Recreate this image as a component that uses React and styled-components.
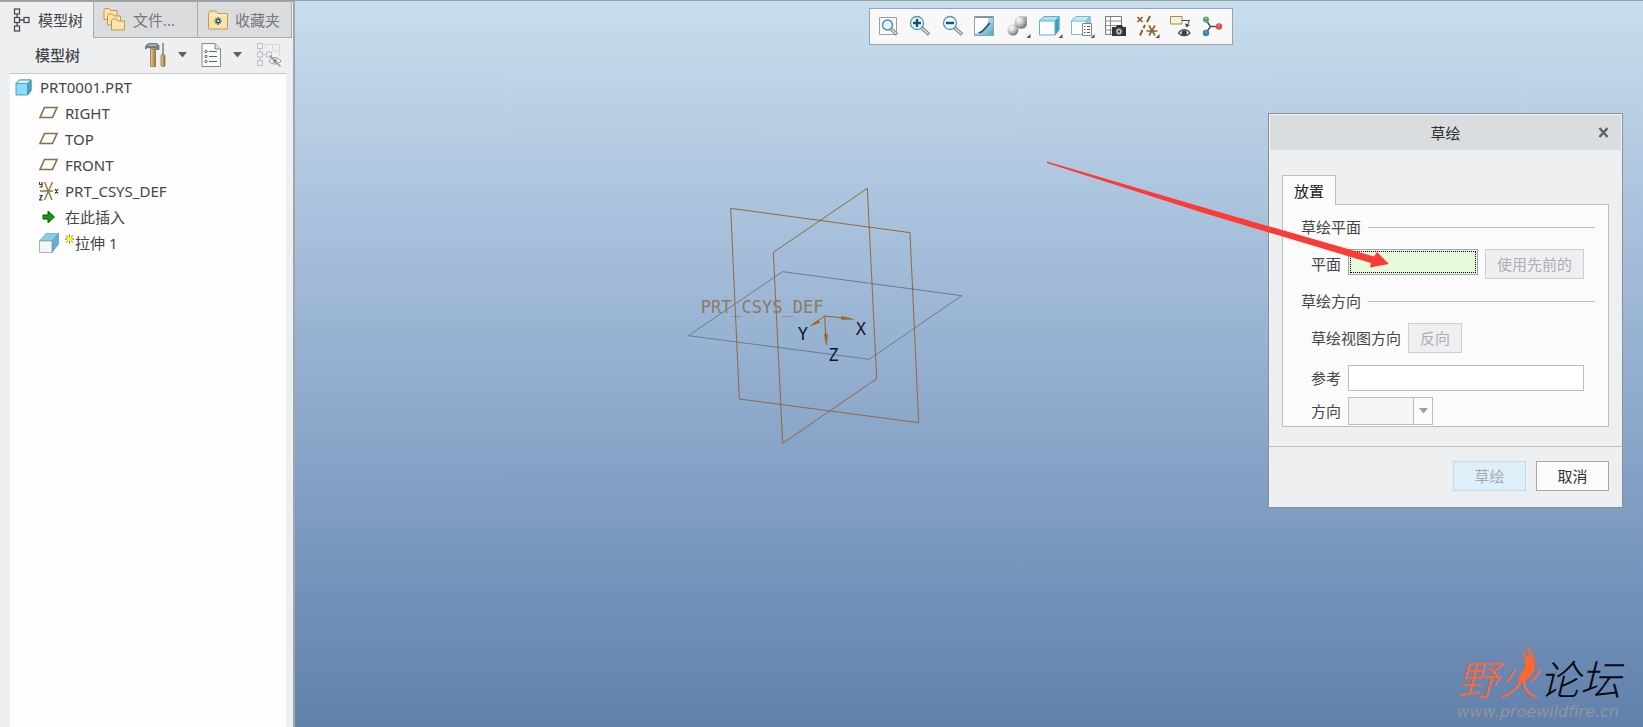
import React, { useState } from "react";
import styled, { createGlobalStyle, css } from "styled-components";

const GlobalStyle = createGlobalStyle`
  *, *::before, *::after {
    box-sizing: border-box;
  }

  body {
    margin: 0;
    overflow: hidden;
    font-family: "Noto Sans", "Noto Sans CJK SC", sans-serif;
    font-size: 15px;
    line-height: 20px;
    color: #444648;
  }

  button, input, select {
    font: inherit;
    color: inherit;
  }
`;

const Page = styled.div`
  display: flex;
  height: 100vh;
  border-top: 1px solid #9a9ea1;
  background: #eeeff1;
`;

/* ---------- side panel ---------- */

const SidePanel = styled.aside`
  display: flex;
  flex-direction: column;
  flex: 0 0 295px;
  border-top: 1px solid #a4a8aa;
  border-right: 2px solid #9fa5aa;
`;

const TabBar = styled.div`
  display: grid;
  grid-template-columns: 93px 104px 1fr;
  height: 36px;
  padding-right: 1px;
`;

const SideTab = styled.button`
  display: flex;
  align-items: center;
  gap: ${(props) => (props.$active ? 8 : 6)}px;
  padding: 0 0 0 9px;
  border: 0;
  background: #eeeff1;
  white-space: nowrap;
  cursor: pointer;
  ${(props) =>
    !props.$active &&
    css`
      border: solid #a8acae;
      border-width: 0 0 1px 1px;
      background: #dadcdd;
      color: #77797b;
    `}
  &:last-child {
    border-right: 1px solid #a8acae;
  }
`;

const TreeHeader = styled.div`
  display: flex;
  align-items: center;
  height: 36px;
  margin: 0 7px 0 10px;
  padding: 0 4px 1px 25px;
  border-bottom: 1px solid #c6c8ca;
`;

const TreeTitle = styled.h2`
  flex: 1;
  margin: 0;
  font-size: 15px;
  font-weight: 500;
`;

const HeaderTools = styled.div`
  display: flex;
  align-items: center;
  gap: 14px;
`;

const ToolGroup = styled.div`
  display: flex;
  align-items: center;
  gap: 11px;
`;

const IconButton = styled.button`
  display: flex;
  align-items: center;
  justify-content: center;
  padding: 0;
  border: 0;
  background: none;
  cursor: pointer;
  &:disabled {
    cursor: default;
  }
`;

const Tree = styled.ul`
  flex: 1;
  margin: 0 7px 0 10px;
  padding: 0 0 0 5px;
  background: #fdfdfd;
  list-style: none;
`;

const TreeItem = styled.li`
  display: flex;
  align-items: center;
  gap: ${(props) => (props.$level ? 6 : 8)}px;
  height: 26px;
  padding-left: ${(props) => (props.$level ? 24 : 0)}px;
`;

const TreeLabel = styled.span`
  display: flex;
  align-items: center;
`;

/* ---------- graphics area ---------- */

const Viewport = styled.main`
  position: relative;
  flex: 1;
  min-width: 0;
  overflow: hidden;
  background: linear-gradient(#c8ddee, #94afd0 50%, #6180ab);
`;

const GraphicsToolbar = styled.div`
  position: absolute;
  top: 7px;
  right: 410px;
  display: flex;
  justify-content: space-between;
  width: 364px;
  height: 37px;
  padding: 0 3px 2px;
  border: 1px solid #9ba3aa;
  background: #f8f8f8;
`;

const ToolButton = styled(IconButton)`
  width: 32px;
  &:hover {
    background: #e0eff8;
  }
`;

const ModelView = styled.svg`
  position: absolute;
  top: 169px;
  left: 375px;
  width: 310px;
  height: 290px;
  font-family: "DejaVu Sans Mono", monospace;
`;

const Pointer = styled.svg`
  position: absolute;
  top: 159px;
  right: 250px;
  width: 350px;
  height: 110px;
  pointer-events: none;
`;

const Watermark = styled.div`
  position: absolute;
  right: 22px;
  bottom: 7px;
  font-family: "Liberation Sans", "Noto Sans CJK SC", sans-serif;
  text-align: right;
`;

const WatermarkName = styled.div`
  position: relative;
  color: #06080c;
  font-size: 41px;
  font-style: italic;
  font-weight: 300;
  line-height: 46px;
`;

const WatermarkAccent = styled.span`
  color: #ff6633;
`;

const Flame = styled.svg`
  position: absolute;
  top: -17px;
  left: 60px;
  width: 20px;
  height: 44px;
`;

const WatermarkUrl = styled.div`
  padding-right: 2px;
  color: #8f959c;
  font-family: "DejaVu Sans", sans-serif;
  font-size: 16px;
  font-style: italic;
  line-height: 16px;
`;

/* ---------- sketch dialog ---------- */

const Dialog = styled.form`
  position: absolute;
  top: 112px;
  right: 20px;
  width: 355px;
  border: 1px solid #888f96;
  background: #eeeff1;
`;

const DialogHeader = styled.header`
  display: grid;
  grid-template-columns: 36px 1fr 36px;
  align-items: center;
  height: 36px;
  border: 1px solid #f2f3f4;
  border-bottom: 0;
  background: #dadddf;
  color: #2c2e30;
`;

const DialogTitle = styled.h1`
  grid-column: 2;
  margin: 0;
  font-size: 15px;
  font-weight: 400;
  text-align: center;
`;

const DialogBody = styled.div`
  padding: 25px 13px 19px;
`;

const DialogTab = styled.button`
  position: relative;
  z-index: 1;
  display: block;
  width: 54px;
  height: 30px;
  margin-bottom: -1px;
  padding: 0;
  border: 1px solid #bcbfc2;
  border-bottom: 0;
  background: #fbfbfb;
  color: #1f2123;
`;

const TabPanel = styled.div`
  border: 1px solid #bcbfc2;
  background: #fbfbfb;
`;

const GroupTitle = styled.h3`
  display: flex;
  align-items: center;
  gap: 7px;
  margin: 0;
  padding: 12px 13px 0 18px;
  font-size: 15px;
  font-weight: 400;
  &::after {
    content: "";
    flex: 1;
    height: 1px;
    background: #bcbfc2;
  }
`;

const FieldRow = styled.div`
  display: flex;
  align-items: ${(props) => (props.$top ? "flex-start" : "center")};
  gap: 7px;
  margin-top: ${(props) => props.$space}px;
  padding: 0 24px 0 28px;
`;

const FieldLabel = styled.label`
  flex: none;
  line-height: 30px;
`;

const TextField = styled.input`
  flex: 1;
  min-width: 0;
  height: 26px;
  padding: 0 6px;
  border: 1px solid #bcbfc2;
  border-radius: 0;
  background: #fff;
  outline: 0;
  ${(props) =>
    props.$collecting &&
    css`
      border-color: #a0a4a6;
      background: #e6fadb;
      outline: 1px dotted #000;
      outline-offset: -3px;
    `}
`;

const SelectBox = styled.div`
  position: relative;
  width: 85px;
  height: 28px;
`;

const Select = styled.select`
  width: 100%;
  height: 100%;
  border: 1px solid #bcbfc2;
  border-radius: 0;
  background: #f4f5f6;
  appearance: none;
  opacity: 1;
`;

const SelectArrow = styled.span`
  position: absolute;
  inset: 1px 1px 1px auto;
  display: flex;
  align-items: center;
  justify-content: center;
  width: 19px;
  border-left: 1px solid #bcbfc2;
  background: #fbfbfb;
  pointer-events: none;
`;

const Button = styled.button`
  flex: none;
  width: ${(props) => props.$width}px;
  height: 30px;
  padding: 0;
  border: 1px solid #a4a7aa;
  background: #fbfbfb;
  color: #333537;
  cursor: pointer;
  &:disabled {
    border-color: #cdcfd1;
    background: #eeeff1;
    color: #adafb1;
    cursor: default;
  }
`;

const PrimaryButton = styled(Button)`
  &:disabled {
    border-color: #b9def2;
    background: #dfeff9;
    color: #a3abb0;
  }
`;

const DialogFooter = styled.footer`
  display: flex;
  justify-content: flex-end;
  gap: 10px;
  padding: 14px 13px 16px;
  border-top: 1px solid #bcbfc2;
`;

/* ---------- icons ---------- */

const Caret = ({ color = "#5c6064" }) => (
  <svg width="9" height="6" viewBox="0 0 9 6">
    <path d="M0 0h9L4.500 5.500z" fill={color} />
  </svg>
);

const ModelTreeIcon = () => (
  <svg width="21" height="26" viewBox="-1 0 21 26" fill="none" stroke="#4a4d50" strokeWidth="1.300">
    <rect x="4.500" y="2" width="5" height="5" />
    <rect x="4.500" y="10.500" width="5" height="5" />
    <rect x="4.500" y="19" width="5" height="5" />
    <rect x="14" y="10.500" width="5" height="5" />
    <path d="M7 7v3.500M7 15.500V19M9.500 13H14" />
  </svg>
);

const folder = "M0.500 2.500l1-1.500h4l1.500 2h6.500v9H0.500z";

const FoldersIcon = () => (
  <svg width="24" height="26" viewBox="0 0 24 26" fill="#fbe2a6" stroke="#b98f4c" strokeWidth="0.900">
    <path d={folder} transform="translate(.500 .500)" />
    <path d={folder} transform="translate(4 6)" />
    <path d={folder} transform="translate(8 11)" />
    <path d="M10 17h11" stroke="#fff6dc" />
  </svg>
);

const FavoritesIcon = () => (
  <svg width="22" height="20" viewBox="0 0 22 20">
    <path d="M1.500 3.500L3 1h6l2 2.500h9.500V19h-19z" fill="#fbe2a6" stroke="#c39a58" />
    <path d="M2.500 5h17" stroke="#fff5d8" />
    <path d="M11 7v8M7 11h8M8.500 8.500l5 5M13.500 8.500l-5 5" stroke="#16556b" strokeWidth="1.200" />
    <circle cx="11" cy="11" r="1" fill="#d9f3fa" />
  </svg>
);

const HammerIcon = () => (
  <svg width="22" height="26" viewBox="0 0 22 26">
    <defs>
      <linearGradient id="wood">
        <stop offset="0" stopColor="#f0cf92" />
        <stop offset="1" stopColor="#9b6f33" />
      </linearGradient>
    </defs>
    <path d="M5.500 7h5v17.500h-5z" fill="url(#wood)" stroke="#8a6531" strokeWidth=".700" />
    <path d="M0.500 4l3-2.500H12l2 2v4h-2.500L11 6H4.500L3 5.500.500 7z" fill="#7b8286" stroke="#4c5154" strokeWidth=".600" />
    <path d="M3.500 3h8" stroke="#d5dadd" />
    <path d="M18 1v12" stroke="#7c8285" strokeWidth="1.500" />
    <rect x="16" y="12.500" width="4" height="12" rx="1.500" fill="url(#wood)" stroke="#8a6531" strokeWidth=".700" />
  </svg>
);

const SettingsListIcon = () => (
  <svg width="21" height="26" viewBox="0 0 21 26" fill="none" stroke="#84898d">
    <path d="M1 1.500h13l5.500 5.500v17.500H1z" fill="#fafbfb" />
    <path d="M14 1.500V7h5.500" fill="#dfe2e4" />
    <path d="M8 9.500h8M8 14.500h8M8 19.500h8" stroke="#5f6569" />
    <circle cx="5" cy="9.500" r="1.200" stroke="#5f6569" />
    <circle cx="5" cy="14.500" r="1.200" stroke="#5f6569" />
    <circle cx="5" cy="19.500" r="1.200" stroke="#5f6569" />
  </svg>
);

const HideTreeIcon = () => (
  <svg width="26" height="26" viewBox="0 0 26 26" fill="none" stroke="#bfc2c5">
    <rect x="1.500" y="1.500" width="5" height="5" />
    <rect x="1.500" y="10" width="5" height="5" />
    <rect x="1.500" y="18.500" width="5" height="5" />
    <rect x="10.500" y="10" width="5" height="5" />
    <path d="M4 6.500V10M4 15v3.500M6.500 12.500h4" />
    <path d="M9 2.500h14.500V14M16.500 2.500V9M9 2.500V7M17 9h6" stroke="#d6d8da" />
    <path d="M13 19c3-4.500 9-4.500 12 0-3 4-9 4-12 0z" stroke="#94999d" />
    <circle cx="19" cy="19" r="2" fill="#94999d" stroke="none" />
    <path d="M13.500 13.500l11 11" stroke="#8c9195" strokeWidth="1.300" />
  </svg>
);

const PartIcon = () => (
  <svg width="17" height="17" viewBox="0 0 17 17" stroke="#3b8fb0" strokeWidth=".800">
    <path d="M1 4.500L4.500 1H16v10.500L12.500 16H1z" fill="#8bdcf5" />
    <path d="M12.500 4.500L16 1v10.500L12.500 16z" fill="#3fa5cb" />
    <path d="M1 4.500L4.500 1H16l-3.500 3.500z" fill="#d3f4fd" />
  </svg>
);

const DatumPlaneIcon = () => (
  <svg width="20" height="14" viewBox="0 0 20 14">
    <path d="M5.500 1.500H18l-4.500 10H1z" fill="#fffdf7" stroke="#85704e" strokeWidth="1.600" />
  </svg>
);

const CsysIcon = () => (
  <svg width="20" height="20" viewBox="0 0 20 20" fill="none">
    <path d="M1 10h13M5.500 1l7.500 18M13.500 1L5.500 19" stroke="#927447" strokeWidth="1.400" />
    <path d="M.500 1v2.500h2.500V1M3 3.500V6H.500M.500 14.500H3L.500 19H3.500M16 8l3 4.500M19 8l-3 4.500" stroke="#33363d" strokeWidth="1.200" />
  </svg>
);

const InsertIcon = () => (
  <svg width="20" height="16" viewBox="0 0 20 16">
    <path d="M4 6h5V2l6.500 6L9 14v-4H4z" fill="#15990f" stroke="#0b5708" />
  </svg>
);

const ExtrudeIcon = () => (
  <svg width="20" height="20" viewBox="0 0 20 20" strokeWidth=".700">
    <path d="M.500 8L7 .500h12.500L13 8z" fill="#8ccbe5" stroke="#6ba0b8" />
    <path d="M13 8l6.500-7.500V11L13 19.500z" fill="#67aed0" stroke="#5b93ac" />
    <path d="M.500 8H13v11.500H.500z" fill="#f3f5f6" stroke="#8c9295" />
  </svg>
);

const NewMark = () => (
  <svg width="10" height="20" viewBox="0 0 10 20">
    <path d="M4.500 1.500v9M0 6h9M1 2.500l7 7M8 2.500l-7 7" stroke="#6c6f1c" />
    <circle cx="4.500" cy="6" r="2.600" fill="#fbf904" />
  </svg>
);

const CloseIcon = () => (
  <svg width="11" height="11" viewBox="0 0 11 11">
    <path d="M1.500 1l8 9M9.500 1l-8 9" stroke="#5e6265" strokeWidth="2.400" />
  </svg>
);

const ToolIcon = ({ children, menu }) => (
  <svg width="24" height="24" viewBox="0 0 24 24" fill="none">
    {children}
    {menu && <path d="M23.500 20v4h-4z" fill="#4f5356" />}
  </svg>
);

const Handle = () => (
  <>
    <path d="M12.500 13.500l7.500 7" stroke="#777d81" strokeWidth="3.400" />
    <path d="M13 14l6.500 6" stroke="#dfe3e5" strokeWidth="1.600" />
  </>
);

const Magnifier = () => (
  <>
    <Handle />
    <circle cx="8" cy="9" r="6.500" fill="#eaf8fd" stroke="#5a97ad" strokeWidth="1.300" />
  </>
);

const tools = [
  {
    name: "Refit",
    icon: (
      <>
        <path d="M2.500 3.500h17v17h-17z" fill="#fafafa" stroke="#9ca1a4" />
        <Handle />
        <circle cx="10.500" cy="11" r="5" fill="#e3f5fc" stroke="#4f8da5" strokeWidth="1.400" />
      </>
    ),
  },
  {
    name: "Zoom in",
    icon: (
      <>
        <Magnifier />
        <path d="M4 9h8M8 5v8" stroke="#0d5877" strokeWidth="2.400" />
      </>
    ),
  },
  {
    name: "Zoom out",
    icon: (
      <>
        <Magnifier />
        <path d="M4 9h8" stroke="#0d5877" strokeWidth="2.400" />
      </>
    ),
  },
  {
    name: "Repaint",
    icon: (
      <>
        <defs>
          <linearGradient id="repaint" x1="0" y1="0" x2="1" y2="1">
            <stop offset=".35" stopColor="#c4e6f2" />
            <stop offset="1" stopColor="#4fa3c1" />
          </linearGradient>
        </defs>
        <path d="M.500 3h19v18.500H.500z" fill="url(#repaint)" stroke="#86a5b1" />
        <path d="M1 4h13c0 8-4 14-13 15z" fill="#fff" />
        <path d="M.500 3h19" stroke="#6f8790" strokeWidth="1.500" />
        <path d="M16 9l-8 8.500-3 1.500" stroke="#155a70" strokeWidth="1.800" />
      </>
    ),
  },
  {
    name: "Display quality",
    menu: true,
    icon: (
      <>
        <defs>
          <radialGradient id="ball" cx=".35" cy=".3" r=".75">
            <stop offset="0" stopColor="#fff" />
            <stop offset=".5" stopColor="#c4c6c8" />
            <stop offset="1" stopColor="#6c6f71" />
          </radialGradient>
        </defs>
        <path d="M12 2.500h8v8c0 4-6 6-9 3z" fill="#a3a6a8" />
        <circle cx="13.500" cy="8.500" r="6" fill="url(#ball)" />
        <circle cx="6" cy="16" r="5.500" fill="url(#ball)" />
      </>
    ),
  },
  {
    name: "Display style",
    menu: true,
    icon: (
      <g stroke="#62afca">
        <path d="M.500 7L5 2.500h15V16l-4 5H.500z" fill="#fff" />
        <path d="M16 7l4-4.500V16l-4 5z" fill="#3f9fc0" />
        <path d="M.500 7L5 2.500h15L16 7z" fill="#a9e0f2" />
      </g>
    ),
  },
  {
    name: "Saved orientations",
    menu: true,
    icon: (
      <>
        <g stroke="#78bcd3">
          <path d="M.500 7L5 2.500h14V16l-4 4.500H.500z" fill="#fff" />
          <path d="M15 7l4-4.500V16l-4 4.500z" fill="#8ccde2" />
          <path d="M.500 7L5 2.500h14L15 7z" fill="#c3eaf6" />
        </g>
        <path d="M11.500 9.500h9v12h-9z" fill="#fafafa" stroke="#84898c" />
        <path d="M13 12.500h1.500M16 12.500h3M13 15.500h1.500M16 15.500h3M13 18.500h1.500M16 18.500h3" stroke="#5d6164" />
      </>
    ),
  },
  {
    name: "View manager",
    icon: (
      <>
        <path d="M1.500 2.500h16v18h-16z" fill="#fdfdfd" stroke="#777b7e" />
        <path d="M1.500 7h16M1.500 11.500h16M1.500 16h16M6.500 2.500v18" stroke="#888c8f" />
        <path d="M8 13h4l1-2h5l1 2h3v9H8z" fill="#33373b" />
        <circle cx="15" cy="17.500" r="3" fill="#d6dadd" stroke="#6a7074" />
        <circle cx="15" cy="17.500" r="1.200" fill="#33373b" />
      </>
    ),
  },
  {
    name: "Datum display",
    menu: true,
    icon: (
      <g stroke="#85652a">
        <path d="M1.500 3l5 5M6.500 3l-5 5" strokeWidth="1.700" />
        <path d="M14 2l-3 6M9 11l-1.500 3M6.500 16l-2.500 5.500" strokeWidth="2" />
        <path d="M10.500 17h11M13 11.500l6 10M19 11.500l-6 10" strokeWidth="1.600" />
      </g>
    ),
  },
  {
    name: "Annotation display",
    icon: (
      <>
        <path d="M1.500 2.500h11.500v7.500H1.500z" fill="#fcf2d1" stroke="#9a8866" />
        <path d="M13 6.500h7.500L18 12" stroke="#44484b" />
        <path d="M16 9.500l1.500 4 3.500-2.500z" fill="#44484b" />
        <path d="M9.500 19c3-4.500 8.500-4.500 11.500 0-3 3.500-8.500 3.500-11.500 0z" fill="#f4f5f5" stroke="#494d50" strokeWidth="1.300" />
        <circle cx="15.200" cy="18.800" r="2.600" fill="#3a3e41" />
      </>
    ),
  },
  {
    name: "Spin center",
    icon: (
      <>
        <path d="M5 6l4.500 6.500L5 19M9.500 12.500H18" stroke="#4c5558" strokeWidth="1.500" />
        <circle cx="5" cy="5.500" r="3" fill="#4fae5c" />
        <circle cx="18" cy="12.500" r="3.200" fill="#d9564c" />
        <circle cx="5" cy="19" r="3.200" fill="#3d84ab" />
        <path d="M4 4.500h1.500M17 11.500h1.500M4 18h1.500" stroke="#fff" opacity=".6" />
      </>
    ),
  },
];

const treeNodes = [
  { label: "PRT0001.PRT", icon: <PartIcon />, level: 0 },
  { label: "RIGHT", icon: <DatumPlaneIcon />, level: 1 },
  { label: "TOP", icon: <DatumPlaneIcon />, level: 1 },
  { label: "FRONT", icon: <DatumPlaneIcon />, level: 1 },
  { label: "PRT_CSYS_DEF", icon: <CsysIcon />, level: 1 },
  { label: "在此插入", icon: <InsertIcon />, level: 1 },
  { label: "拉伸 1", icon: <ExtrudeIcon />, level: 1, isNew: true },
];

const sideTabs = [
  { label: "模型树", icon: <ModelTreeIcon /> },
  { label: "文件...", icon: <FoldersIcon /> },
  { label: "收藏夹", icon: <FavoritesIcon /> },
];

const DatumModel = () => (
  <ModelView viewBox="0 0 930 870" fill="none">
    <g strokeWidth="3">
      <path d="M338 305L875 377 598 568 55 497z" stroke="#6b7b93" />
      <path d="M182 115L720 188 746 758 208 687z" stroke="#91693f" />
      <path d="M592 55L620 626 338 820 310 247z" stroke="#91693f" />
    </g>
    <g stroke="#91622c" strokeWidth="3" fill="#a9681c">
      <path d="M464 438L540 446M464 438l-40 28M464 438l4 80" />
      <path d="M514 439l38 9-38 1zM420 468l24-18 6 8zM462 492h11l-3 35z" strokeWidth="1" />
    </g>
    <text x="92" y="430" fontSize="51" fill="#8d7a68">PRT_CSYS_DEF</text>
    <g fontSize="51" fill="#141a2c">
      <text x="383" y="511">Y</text>
      <text x="557" y="494">X</text>
      <text x="475" y="574">Z</text>
    </g>
  </ModelView>
);

function SketchDialog() {
  const [reference, setReference] = useState("");

  return (
    <Dialog onSubmit={(e) => e.preventDefault()}>
      <DialogHeader>
        <DialogTitle>草绘</DialogTitle>
        <IconButton type="button" aria-label="Close">
          <CloseIcon />
        </IconButton>
      </DialogHeader>
      <DialogBody>
        <DialogTab type="button">放置</DialogTab>
        <TabPanel>
          <GroupTitle>草绘平面</GroupTitle>
          <FieldRow $space={12} $top>
            <FieldLabel htmlFor="plane">平面</FieldLabel>
            <TextField id="plane" readOnly $collecting />
            <Button type="button" $width={99} disabled>使用先前的</Button>
          </FieldRow>
          <GroupTitle>草绘方向</GroupTitle>
          <FieldRow $space={12}>
            <FieldLabel as="span">草绘视图方向</FieldLabel>
            <Button type="button" $width={54} disabled>反向</Button>
          </FieldRow>
          <FieldRow $space={10}>
            <FieldLabel htmlFor="reference">参考</FieldLabel>
            <TextField
              id="reference"
              value={reference}
              onChange={(e) => setReference(e.target.value)}
            />
          </FieldRow>
          <FieldRow $space={3}>
            <FieldLabel htmlFor="orientation">方向</FieldLabel>
            <SelectBox>
              <Select id="orientation" disabled />
              <SelectArrow>
                <Caret color="#9da0a3" />
              </SelectArrow>
            </SelectBox>
          </FieldRow>
        </TabPanel>
      </DialogBody>
      <DialogFooter>
        <PrimaryButton type="submit" $width={73} disabled>草绘</PrimaryButton>
        <Button type="button" $width={73}>取消</Button>
      </DialogFooter>
    </Dialog>
  );
}

function App() {
  const [activeTab, setActiveTab] = useState(0);

  return (
    <Page>
      <GlobalStyle />
      <SidePanel>
        <TabBar>
          {sideTabs.map((tab, i) => (
            <SideTab key={tab.label} $active={i === activeTab} onClick={() => setActiveTab(i)}>
              {tab.icon}
              {tab.label}
            </SideTab>
          ))}
        </TabBar>
        <TreeHeader>
          <TreeTitle>模型树</TreeTitle>
          <HeaderTools>
            <ToolGroup>
              <IconButton aria-label="Settings"><HammerIcon /></IconButton>
              <IconButton aria-label="Settings menu"><Caret /></IconButton>
            </ToolGroup>
            <ToolGroup>
              <IconButton aria-label="Show"><SettingsListIcon /></IconButton>
              <IconButton aria-label="Show menu"><Caret /></IconButton>
            </ToolGroup>
            <IconButton aria-label="Hide tree" disabled><HideTreeIcon /></IconButton>
          </HeaderTools>
        </TreeHeader>
        <Tree>
          {treeNodes.map((node) => (
            <TreeItem key={node.label} $level={node.level}>
              {node.icon}
              <TreeLabel>
                {node.isNew && <NewMark />}
                {node.label}
              </TreeLabel>
            </TreeItem>
          ))}
        </Tree>
      </SidePanel>
      <Viewport>
        <DatumModel />
        <GraphicsToolbar>
          {tools.map((tool) => (
            <ToolButton key={tool.name} aria-label={tool.name}>
              <ToolIcon menu={tool.menu}>{tool.icon}</ToolIcon>
            </ToolButton>
          ))}
        </GraphicsToolbar>
        <Watermark>
          <WatermarkName>
            <WatermarkAccent>野火</WatermarkAccent>论坛
            <Flame viewBox="0 0 60 132">
              <path d="M22 2C48 28 62 60 56 82c-4 20-22 28-32 46l-16-6c-4-22 22-28 20-60-1-17-8-28-16-36 12 6 22 16 25 28 5-18-3-38-15-52z" fill="#ff6633" />
            </Flame>
          </WatermarkName>
          <WatermarkUrl>www.proewildfire.cn</WatermarkUrl>
        </Watermark>
        <SketchDialog />
        <Pointer viewBox="0 0 350 110">
          <path d="M4 1.500L159 47 331 96.500l3-4.500 12 12-19 3.500 1-4.500L159 52.500 4 3z" fill="#fb3b38" />
        </Pointer>
      </Viewport>
    </Page>
  );
}

export default App;
